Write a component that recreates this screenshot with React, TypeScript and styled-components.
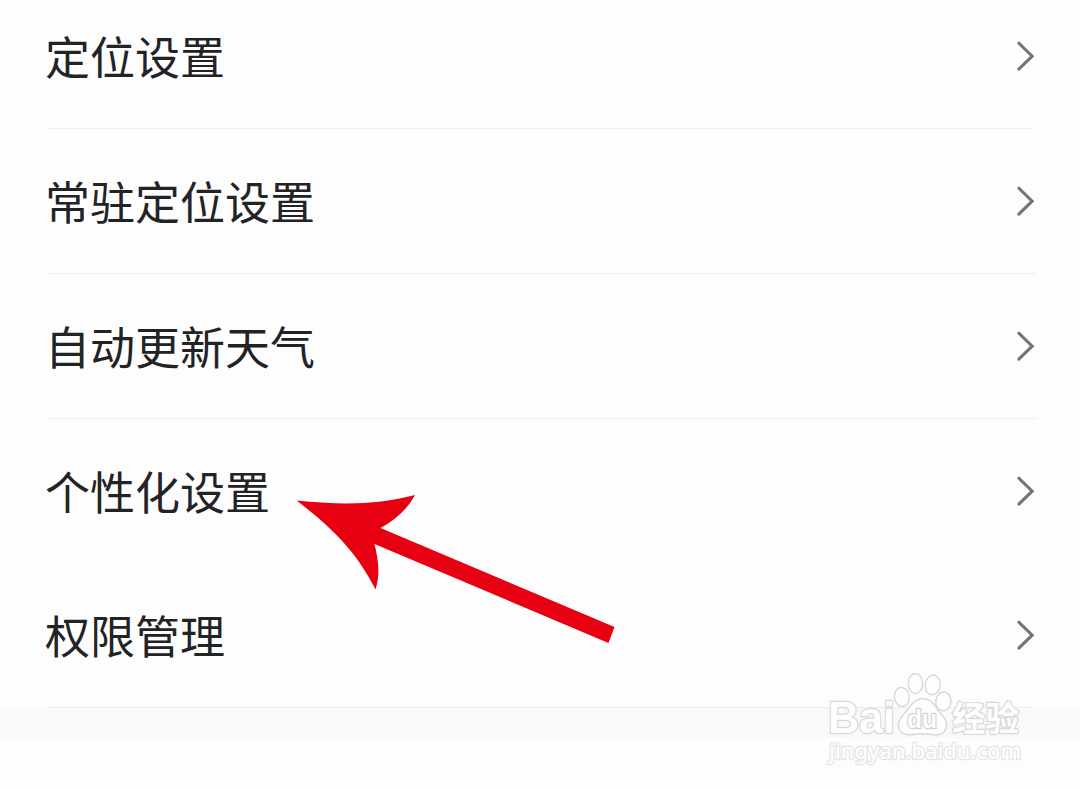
import React from "react";
import styled, {createGlobalStyle} from "styled-components";

const GlobalStyle = createGlobalStyle`
  body {
    margin: 0;
    background: #fdfdfd;
    font-family: "Noto Sans CJK SC", sans-serif;
  }
`;

const Page = styled.main`
  position: relative;
  height: 789px;
  overflow: hidden;
  background: #fdfdfd;
`;

const List = styled.ul`
  margin: 0;
  padding: 0 0 0 48px;
  list-style: none;
`;

const Item = styled.li<{ $height: number; $inset: number; $line: string }>`
  box-sizing: border-box;
  display: flex;
  justify-content: space-between;
  align-items: flex-end;
  height: ${p => p.$height}px;
  margin-right: ${p => p.$inset}px;
  padding-bottom: 38px;
  border-bottom: 1px solid ${p => p.$line};
`;

const Label = styled.span`
  margin-left: -3px;
  color: #232326;
  font-size: 45px;
  line-height: 68px;
  white-space: nowrap;
`;

const Chevron = styled.svg<{ $inset: number }>`
  flex: none;
  width: 20px;
  height: 32px;
  margin: 0 ${p => 45 - p.$inset}px 18px 0;
`;

const Band = styled.div`
  height: 30px;
  background: #f9f8fb;
`;

const Arrow = styled.svg`
  position: absolute;
  left: 290px;
  top: 485px;
`;

const Watermark = styled.svg`
  position: absolute;
  left: 820px;
  top: 665px;
  fill: #fefefe;
  stroke: #d8d8da;
  stroke-width: 1.4;
`;

const Outlined = styled.text<{ $family?: string; $weight?: number; $edge?: string }>`
  font-family: ${p => p.$family || '"Liberation Sans"'}, sans-serif;
  font-weight: ${p => p.$weight || 700};
  stroke: ${p => p.$edge || "#d8d8da"};
  stroke-width: 2.4;
  stroke-linejoin: round;
  paint-order: stroke;
`;

const items = [
    {name: "定位设置", height: 129, inset: 48, line: "#eeedf0"},
    {name: "常驻定位设置", height: 145, inset: 43, line: "#eeedf0"},
    {name: "自动更新天气", height: 145, inset: 43, line: "#eeedf0"},
    {name: "个性化设置", height: 145, inset: 43, line: "transparent"},
    {name: "权限管理", height: 144, inset: 48, line: "#eeebf0"},
];

function App() {
    return (
        <Page>
            <GlobalStyle/>
            <List>
                {items.map(item => (
                    <Item key={item.name} $height={item.height} $inset={item.inset} $line={item.line}>
                        <Label>{item.name}</Label>
                        <Chevron $inset={item.inset} viewBox="0 0 20 32" aria-hidden="true">
                            <path d="M3.8 3.2 L17.2 16.2 L3.8 29.2" fill="none" stroke="#747476"
                                  strokeWidth="3" strokeLinecap="round" strokeLinejoin="miter"/>
                        </Chevron>
                    </Item>
                ))}
            </List>
            <Band/>
            <Arrow width="330" height="165" aria-hidden="true">
                <path fill="#e60012"
                      d="M6.5 15.5 C50 20 88 20 125 10 C117 25 105 35 90.5 43 L324.5 142 L318.5 158 L84.5 59 C89 77 90 91 85.5 104.5 C68 69 43 43 6.5 15.5 Z"/>
            </Arrow>
            <Watermark width="210" height="110">
                <Outlined x="8" y="68" fontSize="44"
                          textLength="67" lengthAdjust="spacingAndGlyphs">Bai</Outlined>
                <ellipse cx="81.8" cy="32" rx="7.4" ry="9.6" transform="rotate(-8 81.8 32)"/>
                <ellipse cx="95.4" cy="18.5" rx="7.2" ry="10"/>
                <ellipse cx="112.7" cy="20" rx="7.6" ry="9.8" transform="rotate(8 112.7 20)"/>
                <ellipse cx="123.4" cy="36.4" rx="7.6" ry="9.4" transform="rotate(8 123.4 36.4)"/>
                <path d="M102.5 33.5 C109 33.5 114 38 117 44 C121 50 127 53 126.5 60 C126 69 119 71 112 69.5 C105 68.5 99 68.5 93 69.5 C85 71 79 68 78.5 61 C78 54 83 51 88 44 C92 38 96 33.5 102.5 33.5 Z"/>
                <Outlined x="87" y="63" fontSize="26"
                          textLength="30" lengthAdjust="spacingAndGlyphs" $edge="#cfcfd2">du</Outlined>
                <Outlined x="132" y="66" fontSize="34" $family={'"Noto Sans CJK SC"'}
                          textLength="67" lengthAdjust="spacingAndGlyphs">经验</Outlined>
                <Outlined x="9" y="94" fontSize="22" $family={'"Noto Sans"'} $weight={500}
                          textLength="192" lengthAdjust="spacingAndGlyphs" $edge="#e4e4e6">jingyan.baidu.com</Outlined>
            </Watermark>
        </Page>
    );
}

export default App;
